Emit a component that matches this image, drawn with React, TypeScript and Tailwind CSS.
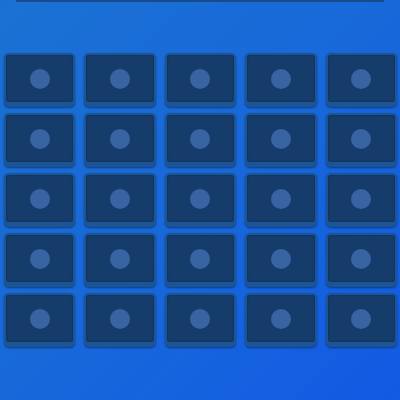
export default function App() {
  const tiles = Array.from({ length: 25 }, (_, i) => i);

  return (
    <div className="h-[400px] w-[400px] overflow-hidden bg-gradient-to-br from-[#1b71d3] via-[#1868da] to-[#135ae4]">
      {/* top bar edge */}
      <div className="mx-[16px] h-[2px] bg-[#164b8c]" />

      {/* grid of pads */}
      <div className="grid grid-cols-5 gap-x-[9px] gap-y-[6px] pl-[4px] pr-[3px] pt-[51px]">
        {tiles.map((i) => (
          <div
            key={i}
            className="h-[54px] rounded-[5px] bg-[#1c5596] p-[2px] pb-[5px] shadow-[0_1px_2px_rgba(8,30,70,0.6)]"
          >
            <div className="flex h-full items-center justify-center rounded-[3px] bg-[#153c6a] shadow-[inset_0_0_2px_rgba(10,30,60,0.6)]">
              <div className="h-[20px] w-[20px] rounded-full bg-[#3964a3]" />
            </div>
          </div>
        ))}
      </div>
    </div>
  );
}
